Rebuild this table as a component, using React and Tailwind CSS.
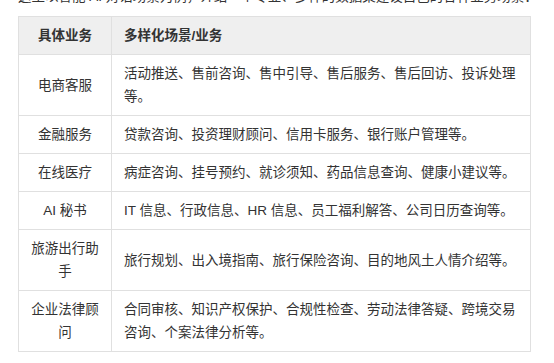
import React from "react";

const rows = [
  ["电商客服", "活动推送、售前咨询、售中引导、售后服务、售后回访、投诉处理等。"],
  ["金融服务", "贷款咨询、投资理财顾问、信用卡服务、银行账户管理等。"],
  ["在线医疗", "病症咨询、挂号预约、就诊须知、药品信息查询、健康小建议等。"],
  ["AI 秘书", "IT 信息、行政信息、HR 信息、员工福利解答、公司日历查询等。"],
  ["旅游出行助手", "旅行规划、出入境指南、旅行保险咨询、目的地风土人情介绍等。"],
  ["企业法律顾问", "合同审核、知识产权保护、合规性检查、劳动法律答疑、跨境交易咨询、个案法律分析等。"],
];

export default function App() {
  return (
    <div
      className="flex flex-col w-[554px] h-[363px] bg-white overflow-hidden text-[#333333] text-[13.5px]"
      style={{ fontFamily: '"Liberation Sans", "Noto Sans CJK SC", sans-serif' }}
    >
      <div className="-mt-[13px] pl-[18px] leading-[20px] whitespace-nowrap text-[#333333]">
        这里以智能 AI 对话场景为例，介绍一个专业、多样的数据集建设自己的各种业务场景：
      </div>
      <div className="mt-[9px] ml-[18px] w-[513px] border border-[#e0e0e0] flex flex-col">
        <div className="flex bg-[#efefef] border-b border-[#e0e0e0] font-bold text-[#333333]">
          <div className="w-[93px] shrink-0 border-r border-[#e0e0e0] px-3 py-[7px] leading-[23px] text-center">
            具体业务
          </div>
          <div className="flex-1 px-3 py-[7px] leading-[23px]">多样化场景/业务</div>
        </div>
        {rows.map(([a, b], i) => (
          <div
            key={i}
            className={
              i === rows.length - 1
                ? "flex"
                : "flex border-b border-[#e0e0e0]"
            }
          >
            <div className="w-[93px] shrink-0 border-r border-[#e0e0e0] px-3 py-[7px] leading-[23px] text-center flex items-center justify-center">
              <span>{a}</span>
            </div>
            <div className="flex-1 px-3 py-[7px] leading-[23px] flex items-center">
              <span>{b}</span>
            </div>
          </div>
        ))}
      </div>
    </div>
  );
}
